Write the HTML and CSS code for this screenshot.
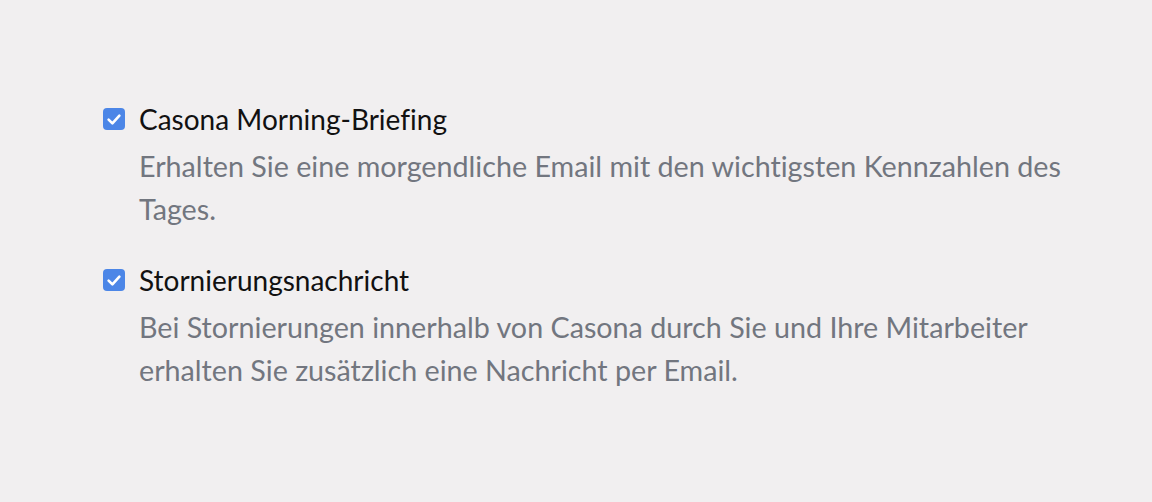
FILE: index.html
```html
<!DOCTYPE html>
<html lang="de">
<head>
<meta charset="utf-8">
<title>Benachrichtigungen</title>
<link rel="stylesheet" href="styles.css">
</head>
<body>
<main class="page">
  <section class="options">
    <label class="option">
      <span class="box" aria-hidden="true">
        <svg viewBox="0 0 22 22" width="22" height="22"><path d="M5.6 11.6l3.8 3.8 7-7.8" fill="none" stroke="#fff" stroke-width="2.6" stroke-linecap="round" stroke-linejoin="round"/></svg>
      </span>
      <span class="text">
        <span class="title">Casona Morning-Briefing</span>
        <span class="desc">Erhalten Sie eine morgendliche Email mit den wichtigsten Kennzahlen des Tages.</span>
      </span>
    </label>
    <label class="option">
      <span class="box" aria-hidden="true">
        <svg viewBox="0 0 22 22" width="22" height="22"><path d="M5.6 11.6l3.8 3.8 7-7.8" fill="none" stroke="#fff" stroke-width="2.6" stroke-linecap="round" stroke-linejoin="round"/></svg>
      </span>
      <span class="text">
        <span class="title">Stornierungsnachricht</span>
        <span class="desc">Bei Stornierungen innerhalb von Casona durch Sie und Ihre Mitarbeiter erhalten Sie zusätzlich eine Nachricht per Email.</span>
      </span>
    </label>
  </section>
</main>
</body>
</html>
```

FILE: styles.css
```css
html, body {
  margin: 0;
  height: 100%;
  background: #f1eff0;
}
body {
  font-family: "Lato", "Liberation Sans", sans-serif;
  font-variant-ligatures: none;
  -webkit-font-smoothing: antialiased;
}
.page {
  padding: 101px 0 0 103px;
}
.options {
  display: flex;
  flex-direction: column;
  gap: 31px;
  width: 990px;
}
.option {
  display: grid;
  grid-template-columns: 22px 1fr;
  column-gap: 14px;
  align-items: start;
}
.box {
  width: 22px;
  height: 22px;
  margin-top: 7px;
  border-radius: 4px;
  background: #4c86e7;
  display: flex;
}
.text {
  display: flex;
  flex-direction: column;
  gap: 8px;
}
.title {
  font-size: 28px;
  line-height: 36px;
  color: #111111;
}
.desc {
  font-size: 28.7px;
  line-height: 43px;
  color: #72767f;
}
```
